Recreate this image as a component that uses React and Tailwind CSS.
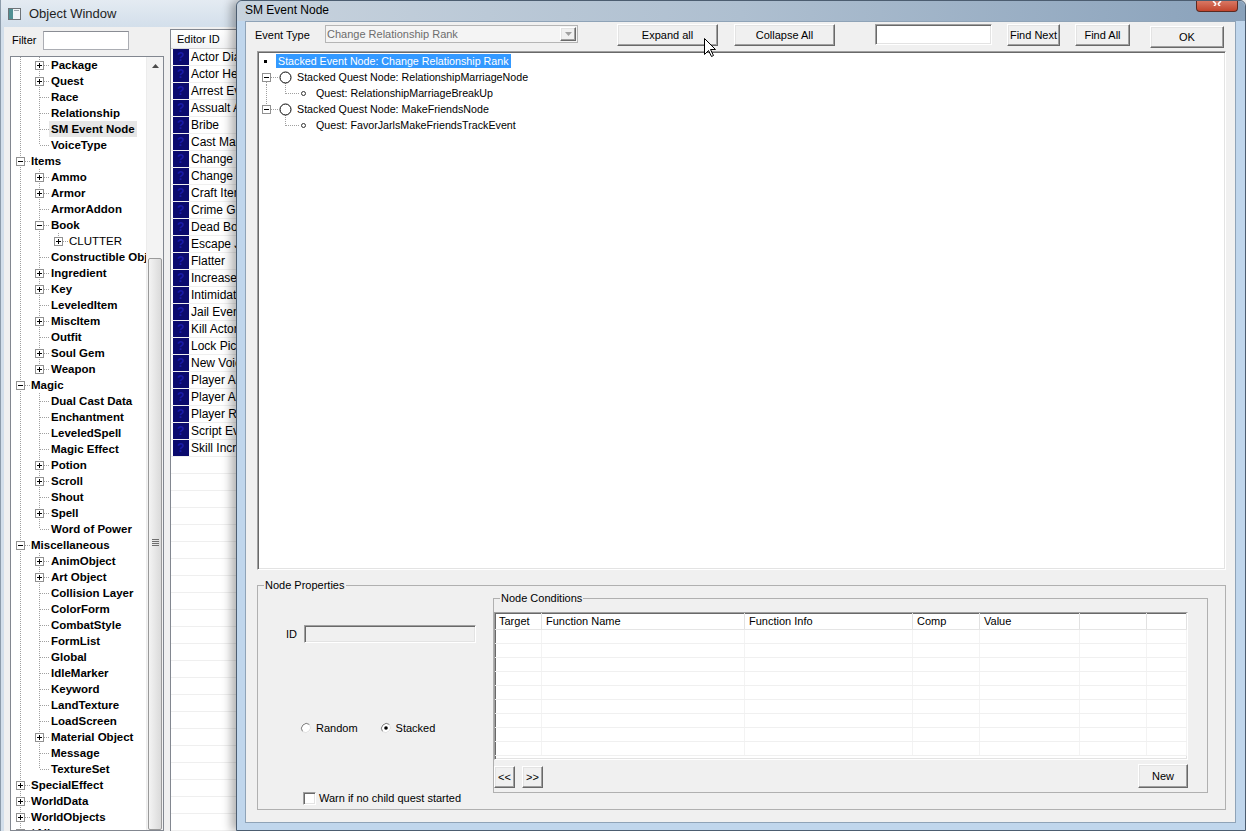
import React from 'react';

const RAISED =
  "bg-[#f0f0f0] border border-t-white border-l-white border-r-[#696969] border-b-[#696969] shadow-[inset_-1px_-1px_0_#a0a0a0,inset_1px_1px_0_#e3e3e3]";
const SUNKEN =
  "border border-t-[#a0a0a0] border-l-[#a0a0a0] border-r-white border-b-white shadow-[inset_1px_1px_0_#696969,inset_-1px_-1px_0_#e3e3e3]";

function Btn({ className = '', children }) {
  return (
    <div className={`${RAISED} flex items-center justify-center text-[11px] text-black leading-none shrink-0 ${className}`}>
      {children}
    </div>
  );
}

const OBJ_ROWS = [
  [2, '+', 'Package'],
  [2, '+', 'Quest'],
  [2, '', 'Race'],
  [2, '', 'Relationship'],
  [2, '', 'SM Event Node', 'S'],
  [2, '', 'VoiceType', 'L'],
  [1, '-', 'Items'],
  [2, '+', 'Ammo'],
  [2, '+', 'Armor'],
  [2, '', 'ArmorAddon'],
  [2, '-', 'Book'],
  [3, '+', 'CLUTTER', 'LR'],
  [2, '', 'Constructible Object'],
  [2, '+', 'Ingredient'],
  [2, '+', 'Key'],
  [2, '', 'LeveledItem'],
  [2, '+', 'MiscItem'],
  [2, '', 'Outfit'],
  [2, '+', 'Soul Gem'],
  [2, '+', 'Weapon', 'L'],
  [1, '-', 'Magic'],
  [2, '', 'Dual Cast Data'],
  [2, '', 'Enchantment'],
  [2, '', 'LeveledSpell'],
  [2, '', 'Magic Effect'],
  [2, '+', 'Potion'],
  [2, '+', 'Scroll'],
  [2, '', 'Shout'],
  [2, '+', 'Spell'],
  [2, '', 'Word of Power', 'L'],
  [1, '-', 'Miscellaneous'],
  [2, '+', 'AnimObject'],
  [2, '+', 'Art Object'],
  [2, '', 'Collision Layer'],
  [2, '', 'ColorForm'],
  [2, '', 'CombatStyle'],
  [2, '', 'FormList'],
  [2, '', 'Global'],
  [2, '', 'IdleMarker'],
  [2, '', 'Keyword'],
  [2, '', 'LandTexture'],
  [2, '', 'LoadScreen'],
  [2, '+', 'Material Object'],
  [2, '', 'Message'],
  [2, '', 'TextureSet', 'L'],
  [1, '+', 'SpecialEffect'],
  [1, '+', 'WorldData'],
  [1, '+', 'WorldObjects'],
  [1, '+', '*All'],
];

const TX = ['pl-[18px]', 'pl-[38px]', 'pl-[56px]'];
const TXN = [20, 40, 58];
const COLX = [9, 28, 47];
const DOT = { stroke: '#a0a0a0', strokeDasharray: '1 1', strokeWidth: 1 };

function ExpBox({ c, sign }) {
  return (
    <g>
      <rect x={c - 4 + 0.5} y="4.5" width="8" height="8" fill="#fff" stroke="#919191" />
      <line x1={c - 2} y1="8.5" x2={c + 3} y2="8.5" stroke="#000" />
      {sign === '+' && <line x1={c + 0.5} y1="6" x2={c + 0.5} y2="11" stroke="#000" />}
    </g>
  );
}

function ObjRow({ r }) {
  const [lvl, exp, text, flags = ''] = r;
  const last = flags.includes('L');
  const sel = flags.includes('S');
  const reg = flags.includes('R');
  const c = COLX[lvl - 1];
  return (
    <div className="relative h-[16px] flex items-center whitespace-nowrap">
      <svg className="absolute left-0 top-0" width="64" height="16">
        <line x1="9.5" y1="0" x2="9.5" y2="16" {...DOT} />
        {lvl >= 2 && <line x1="28.5" y1="0" x2="28.5" y2={lvl === 2 && last ? 8 : 16} {...DOT} />}
        {lvl === 3 && <line x1="47.5" y1="0" x2="47.5" y2={last ? 8 : 16} {...DOT} />}
        <line x1={exp ? c + 5 : c + 1} y1="8.5" x2={TXN[lvl - 1] - 1} y2="8.5" {...DOT} />
        {exp && <ExpBox c={c} sign={exp} />}
      </svg>
      <div className={`relative ${TX[lvl - 1]}`}>
        <span
          className={`px-[2px] text-[11.5px] leading-[16px] text-black block ${reg ? 'font-normal' : 'font-bold'} ${sel ? 'bg-[#e6e6e6]' : ''}`}
        >
          {text}
        </span>
      </div>
    </div>
  );
}

const LIST_ITEMS = [
  'Actor Dialogue', 'Actor Hello', 'Arrest Event', 'Assualt Actor', 'Bribe', 'Cast Magic',
  'Change Location', 'Change Relationship Rank', 'Craft Item', 'Crime Gold', 'Dead Body',
  'Escape Jail', 'Flatter', 'Increase Level', 'Intimidate', 'Jail Event', 'Kill Actor Event',
  'Lock Pick', 'New Voice Power', 'Player Activate', 'Player Add Item', 'Player Recieves Favor',
  'Script Event', 'Skill Increase',
];

function ObjectWindow() {
  const rows = [];
  for (let i = 0; i < 48; i++) rows.push(LIST_ITEMS[i] || null);
  return (
    <div className="absolute left-0 top-0 w-[330px] h-[831px] flex flex-col bg-[#d3dfeb] border-l border-[#8d9cab]">
      <div className="h-[27px] shrink-0 flex items-center bg-linear-to-b from-[#e4ebf2] to-[#d3dfeb]">
        <svg className="ml-[7px]" width="13" height="12" viewBox="0 0 13 12">
          <rect x="0.5" y="0.5" width="12" height="11" fill="#eef2f6" stroke="#6d7378" />
          <rect x="1" y="1" width="4" height="10" fill="#4f8f93" />
          <rect x="6" y="2" width="5" height="1" fill="#9aa3ab" />
        </svg>
        <span className="ml-[8px] text-[13px] text-[#1e1e1e] leading-none">Object Window</span>
      </div>
      <div className="flex-1 ml-[3px] bg-[#f0f0f0] flex flex-row min-h-0">
        <div className="w-[160px] shrink-0 pl-[6px] flex flex-col">
          <div className="h-[29px] flex items-start shrink-0">
            <span className="ml-[2px] w-[31px] mt-[6px] text-[11px] text-black leading-[14px]">Filter</span>
            <div className="w-[86px] h-[19px] mt-[4px] bg-white border border-[#abadb3] border-t-[#8a8d94]" />
          </div>
          <div className="w-[154px] flex-1 border border-[#828790] bg-white flex flex-row min-h-0">
            <div className="w-[135px] overflow-hidden flex flex-col">
              {OBJ_ROWS.map((r, i) => (
                <ObjRow key={i} r={r} />
              ))}
            </div>
            <div className="w-[17px] flex flex-col bg-[#f3f3f3] border-l border-[#ececec]">
              <div className="h-[17px] flex items-center justify-center">
                <svg width="7" height="4" viewBox="0 0 7 4">
                  <path d="M0 4 L3.5 0 L7 4 Z" fill="#4a4a4a" />
                </svg>
              </div>
              <div className="h-[184px]" />
              <div className="flex-1 mx-[1px] rounded-[2px] border border-[#9a9a9a] bg-linear-to-r from-[#f4f4f4] to-[#dadada] flex flex-col items-center">
                <div className="mt-[280px] flex flex-col gap-[1px]">
                  <div className="w-[7px] h-[1px] bg-[#6e6e6e]" />
                  <div className="w-[7px] h-[1px] bg-[#6e6e6e]" />
                  <div className="w-[7px] h-[1px] bg-[#6e6e6e]" />
                  <div className="w-[7px] h-[1px] bg-[#6e6e6e]" />
                </div>
              </div>
            </div>
          </div>
        </div>
        <div className="ml-[6px] mt-[2px] flex-1 bg-white border-l border-t border-[#828790] flex flex-col overflow-hidden">
          <div className="h-[19px] shrink-0 flex items-center border-b border-[#d5d5d5] bg-linear-to-b from-white to-[#f3f4f6]">
            <span className="pl-[6px] text-[11px] text-black">Editor ID</span>
          </div>
          {rows.map((t, i) => (
            <div key={i} className="h-[17px] shrink-0 flex items-center border-b border-[#efefef] whitespace-nowrap">
              {t && (
                <>
                  <div className="ml-[2px] w-[16px] h-[16px] shrink-0 bg-[#0b0b6e] flex items-center justify-center text-[12px] font-bold text-[#1a1aa8] leading-none">?</div>
                  <span className="ml-[2px] text-[12px] text-black whitespace-nowrap">{t}</span>
                </>
              )}
            </div>
          ))}
        </div>
      </div>
    </div>
  );
}

function Radio({ checked }) {
  return (
    <svg width="12" height="12" viewBox="0 0 12 12" className="shrink-0">
      <circle cx="6" cy="6" r="5" fill="#fff" />
      <path d="M9.5 2.5 A5 5 0 0 0 2.5 9.5" fill="none" stroke="#7a7a7a" strokeWidth="1" />
      <path d="M9.5 2.5 A5 5 0 0 1 2.5 9.5" fill="none" stroke="#e0e0e0" strokeWidth="1" />
      {checked && <circle cx="6" cy="6" r="1.8" fill="#000" />}
    </svg>
  );
}

const COLS = [
  ['w-[47px]', 'Target'],
  ['w-[203px]', 'Function Name'],
  ['w-[168px]', 'Function Info'],
  ['w-[67px]', 'Comp'],
  ['w-[100px]', 'Value'],
  ['w-[67px]', ''],
  ['flex-1', ''],
];

function DialogTree() {
  return (
    <div className={`${SUNKEN} bg-white h-[519px] shrink-0 flex flex-col pt-[1px] text-[10.7px] text-black`}>
      <div className="relative h-[16px] flex items-center whitespace-nowrap">
        <svg className="absolute left-0 top-0" width="64" height="16">
          <rect x="6" y="7" width="3" height="3" fill="#000" />
        </svg>
        <div className="relative pl-[18px]">
          <span className="block px-[2px] leading-[14px] bg-[#3399ff] text-white">Stacked Event Node: Change Relationship Rank</span>
        </div>
      </div>
      <div className="relative h-[16px] flex items-center whitespace-nowrap">
        <svg className="absolute left-0 top-0" width="64" height="16">
          <line x1="8.5" y1="13" x2="8.5" y2="16" {...DOT} />
          <line x1="13" y1="8.5" x2="21" y2="8.5" {...DOT} />
          <ExpBox c={8} sign="-" />
          <line x1="27.5" y1="14" x2="27.5" y2="16" {...DOT} />
          <circle cx="27.5" cy="8.5" r="5.5" fill="#fff" stroke="#000" />
        </svg>
        <span className="relative pl-[39px] leading-[16px]">Stacked Quest Node: RelationshipMarriageNode</span>
      </div>
      <div className="relative h-[16px] flex items-center whitespace-nowrap">
        <svg className="absolute left-0 top-0" width="64" height="16">
          <line x1="8.5" y1="0" x2="8.5" y2="16" {...DOT} />
          <line x1="27.5" y1="0" x2="27.5" y2="9" {...DOT} />
          <line x1="28" y1="8.5" x2="42" y2="8.5" {...DOT} />
          <circle cx="45.5" cy="8.5" r="2" fill="#fff" stroke="#333" />
        </svg>
        <span className="relative pl-[58px] leading-[16px]">Quest: RelationshipMarriageBreakUp</span>
      </div>
      <div className="relative h-[16px] flex items-center whitespace-nowrap">
        <svg className="absolute left-0 top-0" width="64" height="16">
          <line x1="8.5" y1="0" x2="8.5" y2="4" {...DOT} />
          <line x1="13" y1="8.5" x2="21" y2="8.5" {...DOT} />
          <ExpBox c={8} sign="-" />
          <line x1="27.5" y1="14" x2="27.5" y2="16" {...DOT} />
          <circle cx="27.5" cy="8.5" r="5.5" fill="#fff" stroke="#000" />
        </svg>
        <span className="relative pl-[39px] leading-[16px]">Stacked Quest Node: MakeFriendsNode</span>
      </div>
      <div className="relative h-[16px] flex items-center whitespace-nowrap">
        <svg className="absolute left-0 top-0" width="64" height="16">
          <line x1="27.5" y1="0" x2="27.5" y2="9" {...DOT} />
          <line x1="28" y1="8.5" x2="42" y2="8.5" {...DOT} />
          <circle cx="45.5" cy="8.5" r="2" fill="#fff" stroke="#333" />
        </svg>
        <span className="relative pl-[58px] leading-[16px]">Quest: FavorJarlsMakeFriendsTrackEvent</span>
      </div>
    </div>
  );
}

function Dialog() {
  const gridRows = Array.from({ length: 9 });
  return (
    <div className="absolute left-[236px] top-0 w-[1010px] h-[831px] flex flex-col border border-[#4c5d70] rounded-t-[6px] bg-[#c0d6ec] shadow-[-5px_0_10px_rgba(0,0,0,0.3)]">
      <div className="h-[20px] shrink-0 flex items-start bg-linear-to-r from-[#c8d3de] via-[#aebfd0] to-[#8aa2bb] rounded-t-[6px]">
        <span className="ml-[8px] mt-[1px] text-[12px] text-black leading-[16px]">SM Event Node</span>
        <div className="ml-auto mr-[7px] w-[42px] h-[11px] rounded-b-[4px] border border-t-0 border-[#5a2a22] bg-linear-to-b from-[#d97763] to-[#c2452d] flex justify-center">
          <svg width="10" height="5" viewBox="0 0 10 5">
            <path d="M1 0 L4 3 M9 0 L6 3 M4 3 L2 5 M6 3 L8 5" stroke="#fff" strokeWidth="1.6" />
          </svg>
        </div>
      </div>
      <div className="mx-[8px] w-[991px] h-[802px] shrink-0 bg-[#f0f0f0] border border-[#8fa3b7] flex flex-col pl-[11px] pr-[9px]">
        <div className="h-[29px] shrink-0 flex items-start -ml-[2px]">
          <span className="w-[70px] shrink-0 mt-[6px] text-[11px] leading-[14px] text-black">Event Type</span>
          <div className="w-[253px] h-[18px] mt-[3px] shrink-0 bg-[#f4f4f4] border border-[#b5b5b5] flex items-center">
            <span className="pl-[1px] text-[11px] text-[#6d6d6d] leading-none flex-1">Change Relationship Rank</span>
            <div className={`${RAISED} w-[16px] h-[14px] mr-[1px] flex items-center justify-center`}>
              <svg width="7" height="4" viewBox="0 0 7 4">
                <path d="M0 0 L7 0 L3.5 4 Z" fill="#a0a0a0" />
              </svg>
            </div>
          </div>
          <Btn className="ml-[39px] mt-[2px] w-[101px] h-[22px]">Expand all</Btn>
          <Btn className="ml-[16px] mt-[2px] w-[101px] h-[22px]">Collapse All</Btn>
          <div className={`${SUNKEN} ml-[40px] mt-[2px] w-[117px] h-[21px] shrink-0 bg-white`} />
          <Btn className="ml-[15px] mt-[2px] w-[53px] h-[22px]">Find Next</Btn>
          <Btn className="ml-[15px] mt-[2px] w-[55px] h-[22px]">Find All</Btn>
          <Btn className="ml-[20px] mt-[4px] w-[74px] h-[22px] border-[#696969] border-t-[#696969] border-l-[#696969]">OK</Btn>
        </div>

        <DialogTree />

        <div className="relative mt-[15px] h-[225px] shrink-0 border border-[#b0b0b0] flex flex-row">
          <span className="absolute -top-[8px] left-[6px] px-[1px] bg-[#f0f0f0] text-[11px] leading-[14px] text-black">Node Properties</span>
          <div className="w-[235px] shrink-0 flex flex-col">
            <div className="mt-[39px] pl-[28px] flex items-center">
              <span className="w-[18px] text-[11px] text-black leading-none">ID</span>
              <div className={`${SUNKEN} w-[172px] h-[18px] bg-[#f0f0f0]`} />
            </div>
            <div className="mt-[78px] pl-[42px] h-[14px] flex items-center">
              <Radio />
              <span className="ml-[4px] text-[11px] text-black leading-none">Random</span>
              <div className="ml-[22px]"><Radio checked /></div>
              <span className="ml-[4px] text-[11px] text-black leading-none">Stacked</span>
            </div>
            <div className="mt-[56px] pl-[45px] h-[14px] flex items-center">
              <div className={`${SUNKEN} w-[13px] h-[13px] bg-white shrink-0`} />
              <span className="ml-[3px] text-[11px] text-black leading-none whitespace-nowrap">Warn if no child quest started</span>
            </div>
          </div>

          <div className="relative mt-[12px] w-[715px] h-[195px] shrink-0 border border-[#b0b0b0] flex flex-col">
            <span className="absolute -top-[8px] left-[6px] px-[1px] bg-[#f0f0f0] text-[11px] leading-[14px] text-black">Node Conditions</span>
            <div className={`${SUNKEN} mt-[13px] w-[694px] h-[148px] bg-white flex flex-col overflow-hidden`}>
              <div className="h-[17px] shrink-0 flex border-b border-[#e5e5e5]">
                {COLS.map(([w, label], i) => (
                  <div key={i} className={`${w} shrink-0 border-r border-[#e2e2e2] pl-[4px] flex items-center text-[11px] text-black leading-none whitespace-nowrap`}>
                    {label}
                  </div>
                ))}
              </div>
              {gridRows.map((_, r) => (
                <div key={r} className="h-[14px] shrink-0 flex border-b border-[#f0f0f0]">
                  {COLS.map(([w], i) => (
                    <div key={i} className={`${w} shrink-0 border-r border-[#f3f3f3]`} />
                  ))}
                </div>
              ))}
            </div>
            <div className="mt-[4px] w-[694px] flex items-start">
              <Btn className="mt-[2px] w-[21px] h-[22px]">&lt;&lt;</Btn>
              <Btn className="ml-[7px] mt-[2px] w-[21px] h-[22px]">&gt;&gt;</Btn>
              <Btn className="ml-auto w-[50px] h-[24px]">New</Btn>
            </div>
          </div>
        </div>
      </div>
    </div>
  );
}

export default function App() {
  return (
    <div className="relative w-[1246px] h-[831px] overflow-hidden bg-[#f0f0f0] font-['Liberation_Sans',Arial,sans-serif]">
      <ObjectWindow />
      <Dialog />
      <svg className="absolute left-[704px] top-[38px]" width="13" height="20" viewBox="0 0 13 20">
        <path d="M0.5 0.5 L0.5 16.5 L4.5 12.5 L7.5 18.5 L9.5 17.5 L6.5 11.5 L11.5 11.5 Z" fill="#fff" stroke="#000" strokeWidth="1" />
      </svg>
    </div>
  );
}
